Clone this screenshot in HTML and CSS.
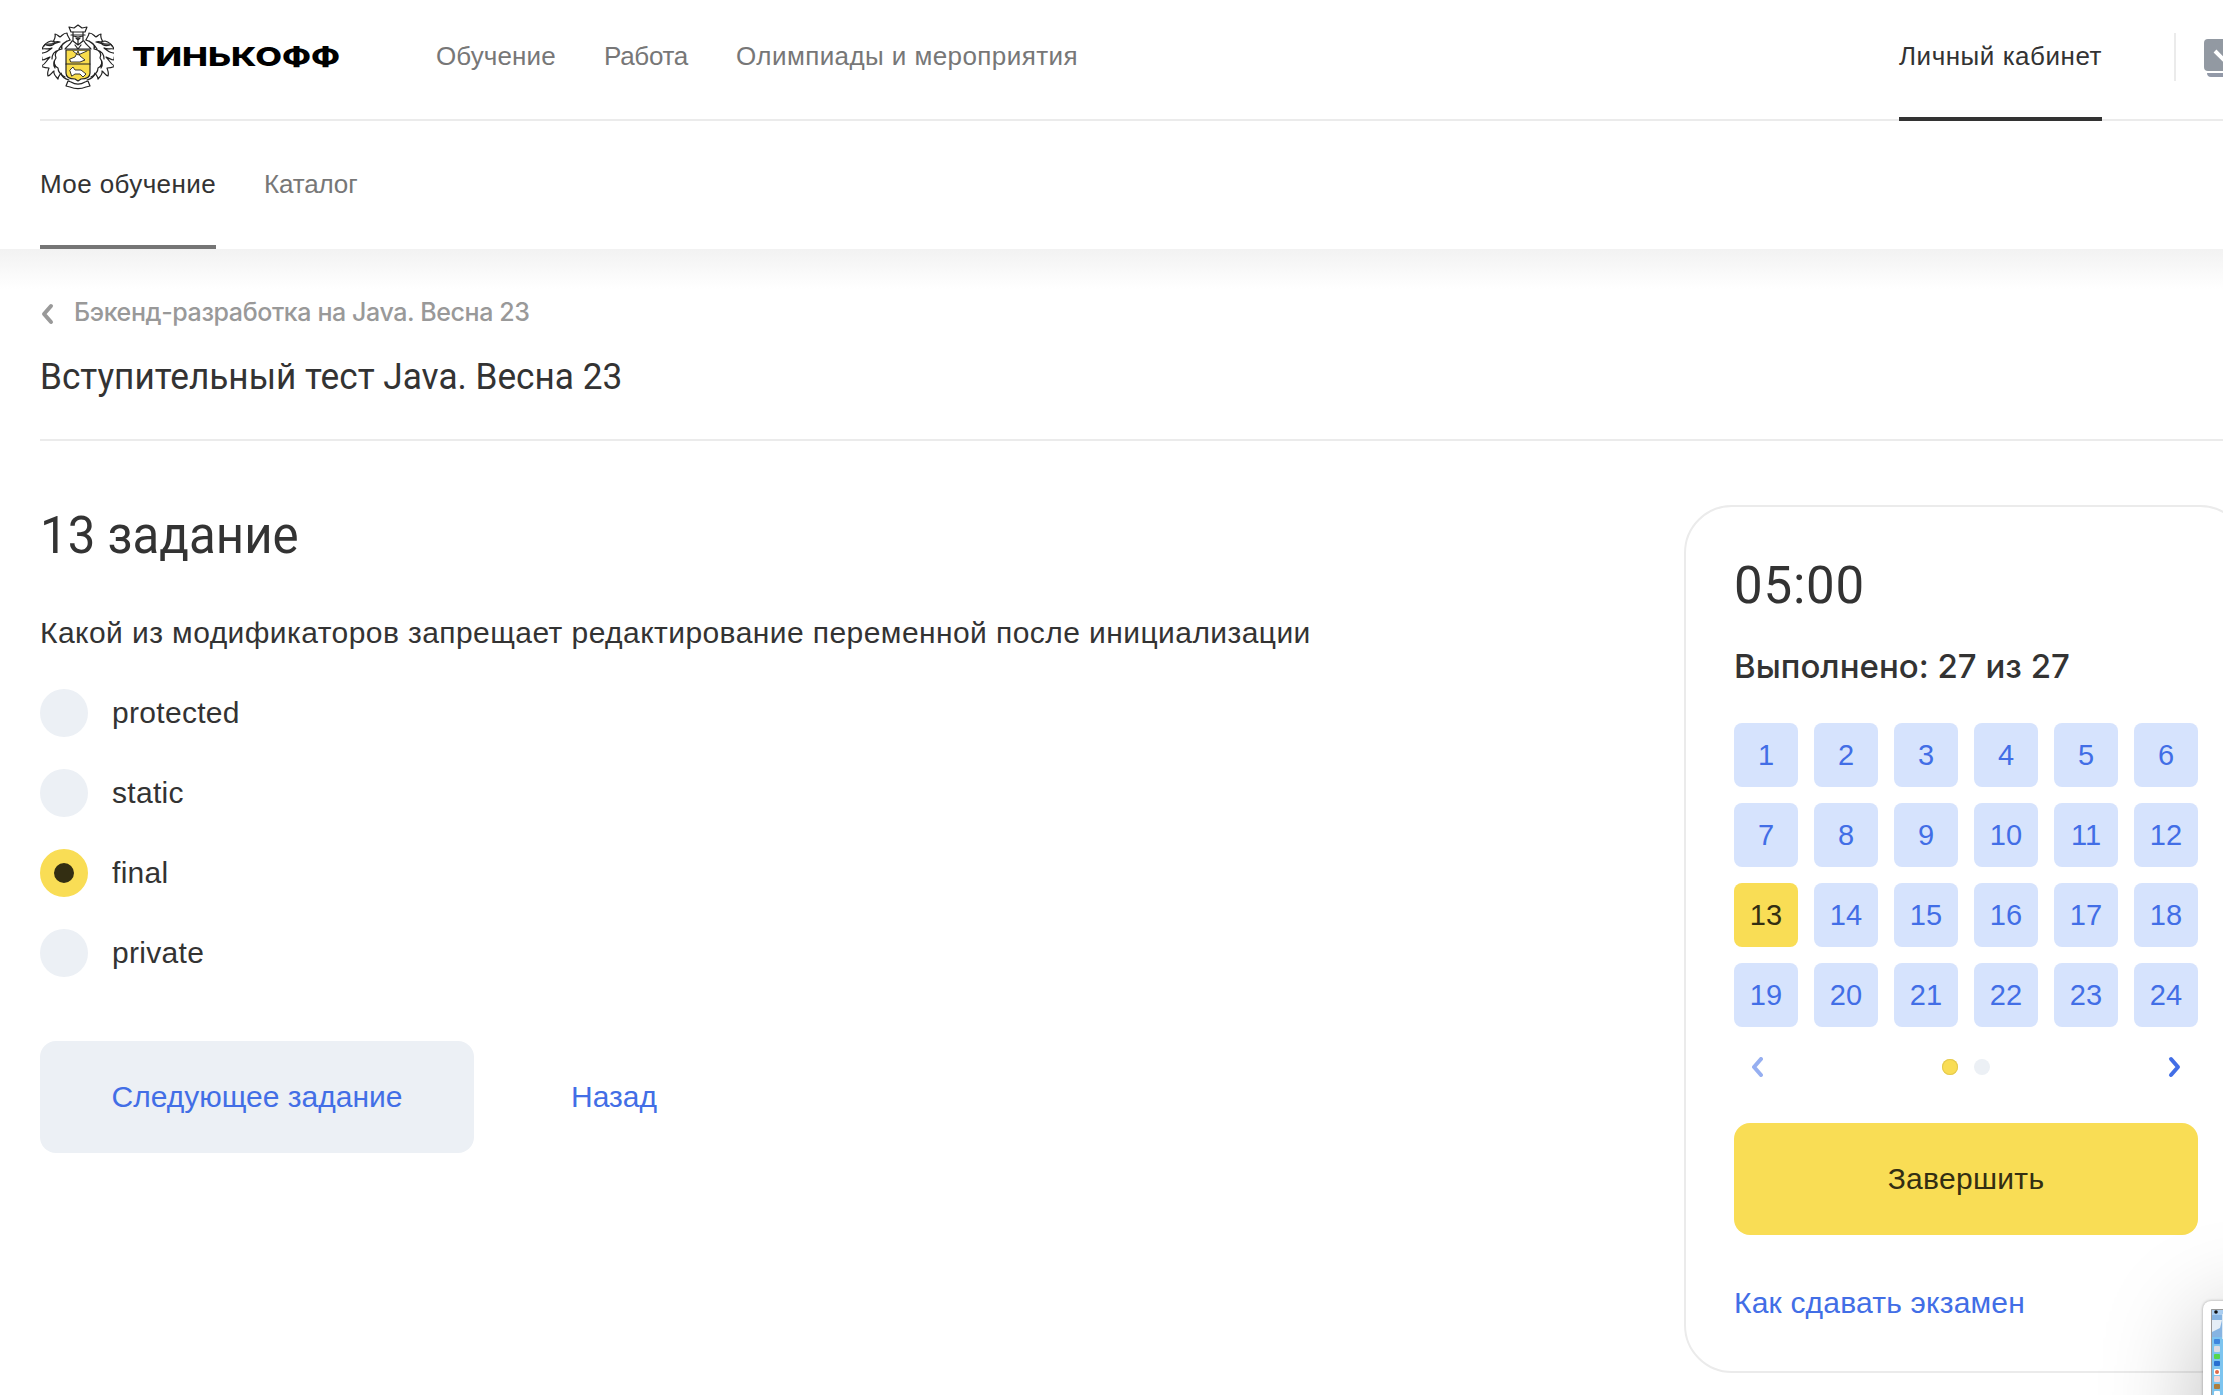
FILE: index.html
```html
<!DOCTYPE html>
<html lang="ru">
<head>
<meta charset="utf-8">
<title>Вступительный тест Java. Весна 23</title>
<link rel="stylesheet" href="styles.css">
</head>
<body>
<div class="page">
<header class="header">
  <a class="logo">
    <svg class="crest" width="72" height="66" viewBox="0 0 72 66" fill="none" stroke="#222" stroke-width="1.2" stroke-linejoin="round" stroke-linecap="round">
      <path d="M29 8l-2-5 5 1 4-3 4 3 5-1-2 5zM29 11h14" fill="#fff"/>
      <path d="M31 8v9l5 4 5-4V8M31 12l5 1 5-1M34 14l2 2 2-2M36 13v8M30 17c-2 4-5 5-7 8h26c-2-3-5-4-7-8M33 21l3 4 3-4"/>
      <g id="wing">
        <path d="M28 16c-1-3-3-4-3-7-4 0-5 3-7 4-2-1-3-3-5-3 1 4-1 6-2 8 3 0 5-1 7 0-5 1-9 3-13 2-3 0-4 3-5 5 4-1 6 1 10-1-4 3-7 6-13 5 3 2 3 4 3 7 3 0 5-2 8-3-4 4-5 8-9 9 3 2 6 2 8 2-1 3-2 5-1 8 3-1 4-4 6-5-1 3 2 6 4 8 0-3 2-4 3-6 1 4 4 6 8 7"/>
        <path d="M28 16c-6 2-10 5-8 9-6 1-8 5-6 9-3 4-2 8 2 10 0 4 3 7 7 9M25 17c-2 2-6 3-8 8M17 26c-4 1-7 4-7 9M14 34c-3 4-3 7-1 10"/>
        <path d="M2 22c1-3 4-4 7-5 2 0 4 0 4 2-2 3-6 3-9 2"/>
      </g>
      <use href="#wing" transform="matrix(-1 0 0 1 72 0)"/>
      <path d="M24 26h24v23c0 5-5 6-9 6l-3 2-3-2c-4 0-9-1-9-6z" fill="#f9dd4c"/>
      <path d="M24 40h24"/>
      <path d="M28 35l5-2 3-6 2 5 5 4-5 2H29zM28 46l3-3 2 3h6l5 4-3 3-3-3h-5l-3 2zM31 27l5 4 9-4" fill="#fff" stroke-width=".9"/>
      <path d="M26 57l3 1c5 3 9 3 14 0l3-1 2 5-4 1c-5 2-11 2-16 0l-4-1z" fill="#fff"/>
    </svg>
    <svg class="wordmark" width="212" height="32" viewBox="0 0 212 32"><text x="0" y="24" textLength="208" lengthAdjust="spacingAndGlyphs">ТИНЬКОФФ</text></svg>
  </a>
  <nav class="nav">
    <a class="nav-study">Обучение</a><a class="nav-work">Работа</a><a class="nav-events">Олимпиады и мероприятия</a>
  </nav>
  <a class="cabinet">Личный кабинет</a>
  <div class="messages">
    <svg width="48" height="38" viewBox="0 0 48 38"><rect width="48" height="32" rx="4" fill="#9299a2"/><path d="M3 34h42v0c0 2-1 4-4 4H7c-3 0-4-2-4-4z" fill="#9299a8"/><path d="M11 12l13 13 13-13" fill="none" stroke="#fff" stroke-width="4"/></svg>
  </div>
</header>
<nav class="tabs"><a class="tab tab-active">Мое обучение</a><a class="tab">Каталог</a></nav>
<main class="main">
  <div class="intro">
    <a class="crumb"><svg width="14" height="22" viewBox="0 0 14 22"><path d="M11 3L4 11l7 8" /></svg><span class="crumb-text">Бэкенд-разработка на Java. Весна 23</span></a>
    <h1 class="title"><span>Вступительный тест Java. Весна 23</span></h1>
  </div>
  <div class="content">
    <section class="task">
      <h2 class="task-title"><span>13 задание</span></h2>
      <p class="question">Какой из модификаторов запрещает редактирование переменной после инициализации</p>
      <div class="options">
        <label class="option"><i class="radio"></i><span>protected</span></label>
        <label class="option"><i class="radio"></i><span>static</span></label>
        <label class="option"><i class="radio radio-on"></i><span>final</span></label>
        <label class="option"><i class="radio"></i><span>private</span></label>
      </div>
      <div class="actions"><a class="next">Следующее задание</a><a class="back">Назад</a></div>
    </section>
    <aside class="card">
      <div class="timer">05:00</div>
      <div class="done">Выполнено: 27 из 27</div>
      <div class="grid">
        <a>1</a><a>2</a><a>3</a><a>4</a><a>5</a><a>6</a>
        <a>7</a><a>8</a><a>9</a><a>10</a><a>11</a><a>12</a>
        <a class="current">13</a><a>14</a><a>15</a><a>16</a><a>17</a><a>18</a>
        <a>19</a><a>20</a><a>21</a><a>22</a><a>23</a><a>24</a>
      </div>
      <div class="pager">
        <svg class="prev" width="14" height="22" viewBox="0 0 14 22"><path d="M11 3L4 11l7 8"/></svg>
        <div class="dots"><i class="dot dot-on"></i><i class="dot"></i></div>
        <svg class="fwd" width="14" height="22" viewBox="0 0 14 22"><path d="M3 3l7 8-7 8"/></svg>
      </div>
      <a class="finish">Завершить</a>
      <a class="help">Как сдавать экзамен</a>
    </aside>
  </div>
</main>
<div class="preview"><svg width="40" height="100" viewBox="0 0 40 100">
  <rect width="40" height="100" fill="#7cc4ef"/><rect width="40" height="28" fill="#86b4e2"/><path d="M1 11h10l-2 8-8 4z" fill="#e5eef6"/><path d="M0 0h40v6H0z" fill="#a9cdf0"/><circle cx="5" cy="3" r="1.8" fill="#111"/><path d="M11 5h29v25H11z" fill="#dbe9f4"/>
  <rect x="3" y="30" width="6" height="5" rx="1" fill="#3e86de"/><rect x="3" y="37" width="6" height="6" rx="1" fill="#dcdce2"/><rect x="3" y="45" width="6" height="5" rx="1" fill="#55d64b"/><rect x="3" y="52" width="6" height="5" rx="1" fill="#286fd0"/><rect x="3" y="60" width="6" height="6" rx="1" fill="#fff"/><circle cx="6" cy="63" r="2" fill="#e06a4a"/><rect x="3" y="67" width="6" height="6" rx="1" fill="#f2d6d6"/><rect x="3" y="75" width="6" height="5" rx="1" fill="#ad7d3d"/><rect x="3" y="82" width="6" height="6" rx="1" fill="#fff"/>
  <path d="M.5 100V.5H40" fill="none" stroke="#999"/>
</svg></div>
</div>
</body>
</html>
```
FILE: styles.css
```css
* { box-sizing: border-box; }
body { margin: 0; background: #fff; color: #333; font: 26px "Liberation Sans", sans-serif; }
.page { position: relative; width: 2223px; height: 1395px; overflow: hidden; }
h1, h2, p { margin: 0; font-weight: 400; }
.header { display: flex; height: 121px; margin-left: 40px; box-shadow: inset 0 -2px #ebebeb; line-height: 112px; white-space: nowrap; }
.logo { display: flex; flex: none; width: 396px; padding-top: 24px; }
.crest { margin-left: 2px; flex: none; }
.wordmark { margin: 18px 0 0 18px; flex: none; }
.wordmark text { font: 800 26px Inter, sans-serif; fill: #000; }
.nav { display: flex; flex: none; gap: 48px; color: #777; }
.nav a { flex: none; }
.nav-study { width: 120px; letter-spacing: .1px; }
.nav-work { width: 84px; letter-spacing: -.3px; }
.nav-events { width: 342px; letter-spacing: .42px; }
.cabinet { height: 121px; width: 203px; flex: none; margin-left: 821px; border-bottom: 4px solid #333; letter-spacing: .53px; }
.messages { margin: 33px 0 0 72px; height: 48px; padding: 6px 0 0 28px; border-left: 2px solid #ebebeb; flex: none; line-height: 0; }
.tabs { display: flex; gap: 48px; height: 128px; padding-left: 40px; line-height: 126px; color: #777; letter-spacing: -.15px; white-space: nowrap; }
.tab-active { width: 176px; color: #333; border-bottom: 4px solid #757575; letter-spacing: .4px; }
.main { background: linear-gradient(#f2f2f2, #fff 40px); padding-top: 45px; }
.intro { margin-left: 40px; height: 147px; border-bottom: 2px solid #ebebeb; white-space: nowrap; }
.crumb { display: flex; align-items: center; height: 36px; gap: 20px; color: #999; font: 500 25px/36px Inter, sans-serif; letter-spacing: -.4px; }
.crumb svg { position: relative; top: 2px; }
.crumb path { fill: none; stroke: #999; stroke-width: 4; stroke-linecap: round; stroke-linejoin: round; }
.title { margin-top: 25px; font: 400 37px/44px Roboto, sans-serif; }
.title span { display: inline-block; transform: scaleX(.951); transform-origin: left; }
.content { display: flex; padding: 64px 0 0 40px; }
.task { width: 1644px; flex: none; }
.task-title { margin-top: 1px; font: 400 51px/60px Roboto, sans-serif; }
.task-title span { display: inline-block; transform: scaleX(.965); transform-origin: left; }
.question { margin-top: 45px; font-size: 30px; line-height: 44px; letter-spacing: .43px; white-space: nowrap; }
.options { display: grid; gap: 32px; margin-top: 34px; }
.option { display: flex; align-items: center; gap: 24px; height: 48px; font-size: 30px; letter-spacing: .3px; }
.radio { width: 48px; height: 48px; border-radius: 50%; background: #ecf0f5; }
.radio-on { border: 14px solid #f9dd55; background: #332e12; }
.actions { display: flex; margin-top: 64px; font-size: 30px; line-height: 112px; color: #426ee6; }
.next { width: 434px; border-radius: 16px; background: #ecf0f5; text-align: center; }
.back { margin-left: 97px; }
.card { width: 564px; height: 868px; flex: none; padding: 49px 48px 48px; border: 2px solid #ebebeb; border-radius: 48px; }
.timer { font: 400 51px/60px Roboto, sans-serif; letter-spacing: .8px; }
.done { margin-top: 28px; font: 500 33px/44px Inter, sans-serif; white-space: nowrap; }
.grid { display: grid; grid-template-columns: repeat(6, 64px); gap: 16px; margin-top: 35px; }
.grid a { height: 64px; border-radius: 8px; background: #d6e3fd; color: #426ee6; font-size: 29px; line-height: 64px; text-align: center; }
.grid .current { background: #f9dd55; color: #332e12; }
.pager { display: flex; align-items: center; justify-content: space-between; height: 32px; margin-top: 24px; padding: 0 16px; }
.pager path { fill: none; stroke: #426ee6; stroke-width: 4; stroke-linecap: round; stroke-linejoin: round; }
.prev { opacity: .55; }
.dots { display: flex; gap: 16px; }
.dot { width: 16px; height: 16px; border-radius: 50%; background: #ecf0f5; }
.dot-on { background: #f9dd55; box-shadow: inset 0 0 0 1px #e3c94f; }
.finish { display: block; height: 112px; margin-top: 40px; border-radius: 16px; background: #f9dd55; color: #332e12; font-size: 30px; line-height: 112px; letter-spacing: .3px; text-align: center; }
.help { display: block; margin-top: 48px; color: #426ee6; font-size: 30px; line-height: 40px; letter-spacing: .2px; }
.preview { position: absolute; left: 2203px; top: 1301px; width: 200px; height: 260px; padding: 8px; border-radius: 8px; background: #fff; box-shadow: 0 0 3px rgba(0, 0, 0, .35), 0 20px 100px rgba(0, 0, 0, .27); }
```
